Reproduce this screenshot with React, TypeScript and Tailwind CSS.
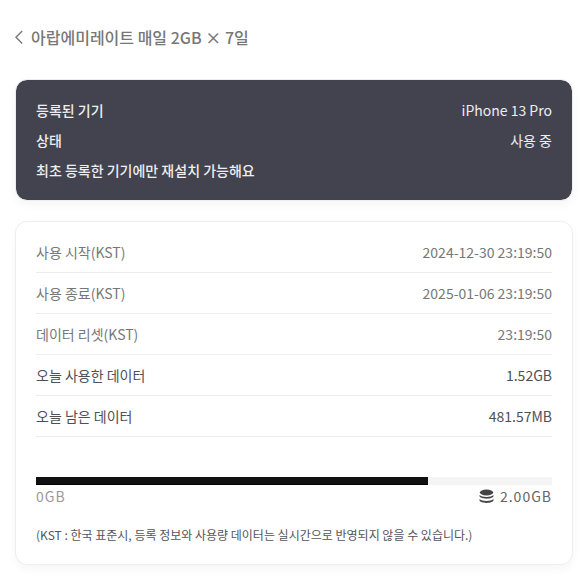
import React from 'react';

interface UsageRow {
  label: string;
  value: string;
  strong?: boolean;
}

const deviceRows: UsageRow[] = [
  { label: '등록된 기기', value: 'iPhone 13 Pro' },
  { label: '상태', value: '사용 중' },
];

const usageRows: UsageRow[] = [
  { label: '사용 시작(KST)', value: '2024-12-30 23:19:50' },
  { label: '사용 종료(KST)', value: '2025-01-06 23:19:50' },
  { label: '데이터 리셋(KST)', value: '23:19:50' },
  { label: '오늘 사용한 데이터', value: '1.52GB', strong: true },
  { label: '오늘 남은 데이터', value: '481.57MB', strong: true },
];

const usedGb = 1.52;
const totalGb = 2;

const BackIcon = () => (
  <svg className="w-2 h-4" viewBox="0 0 8 16" fill="none" stroke="currentColor" strokeWidth="1.4" aria-hidden="true">
    <path d="M7.2 2L1 8.200l6.200 6.200" />
  </svg>
);

const DataIcon = () => (
  <svg className="w-4 h-4" viewBox="0 0 16 16" fill="currentColor" aria-hidden="true">
    <ellipse cx="7.5" cy="4.5" rx="6.7" ry="2.9" />
    <path d="M.5 6.900C1.600 8.100 4.300 8.900 7.500 8.900s5.900-.8 7-2v1.200C14.500 9.500 11.300 10.700 7.500 10.700S.5 9.500.5 8.100z" />
    <path d="M.5 11.100C1.600 12.300 4.300 13.100 7.500 13.100s5.900-.8 7-2v1.200C14.500 13.700 11.300 14.900 7.500 14.900S.5 13.700.5 12.300z" />
  </svg>
);

const App: React.FC = () => {
  const percent = (usedGb / totalGb) * 100;

  return (
    <main className="pl-[15px] pr-[14px] pt-6 pb-5 bg-white text-sm font-['Noto_Sans_CJK_KR','Noto_Sans',sans-serif]">
      <h1>
        <button type="button" className="flex items-center gap-2 h-[26px] text-base font-medium text-[#777]">
          <BackIcon />
          아랍에미레이트 매일 2GB × 7일
        </button>
      </h1>

      <section className="mt-[29px] p-5 rounded-xl border border-[#eee] bg-[#42434e] bg-clip-padding text-[#eee] shadow-[0_4px_10px_rgba(0,0,0,0.04)]">
        <dl className="flex flex-col gap-[10px] leading-5">
          {deviceRows.map((row) => (
            <div key={row.label} className="flex justify-between">
              <dt className="font-medium">{row.label}</dt>
              <dd>{row.value}</dd>
            </div>
          ))}
        </dl>
        <p className="mt-[10px] leading-5 font-medium">최초 등록한 기기에만 재설치 가능해요</p>
      </section>

      <section className="mt-5 px-5 pt-[10px] pb-[19px] rounded-xl border border-[#eee] bg-white shadow-[0_4px_10px_rgba(0,0,0,0.04)]">
        <dl>
          {usageRows.map((row) => (
            <div
              key={row.label}
              className={`flex items-center justify-between h-[41px] border-b border-[#eee] ${row.strong ? 'text-[#4f4f57]' : 'text-[#777]'}`}
            >
              <dt>{row.label}</dt>
              <dd>{row.value}</dd>
            </div>
          ))}
        </dl>

        <div
          className="mt-10 h-2 bg-[#f4f4f4]"
          role="progressbar"
          aria-label="오늘 사용한 데이터"
          aria-valuenow={percent}
          aria-valuemin={0}
          aria-valuemax={100}
        >
          <div className="h-full bg-[#111] border-b border-black" style={{ width: `${percent}%` }} />
        </div>
        <div className="flex justify-between leading-[22px] tracking-[1px]">
          <span className="text-[#999]">0GB</span>
          <span className="flex items-center gap-[5px] text-[#444]">
            <DataIcon />
            <span className="text-[#666]">2.00GB</span>
          </span>
        </div>

        <p className="mt-[18px] text-xs leading-5 text-[#55555a]">
          (KST : 한국 표준시, 등록 정보와 사용량 데이터는 실시간으로 반영되지 않을 수 있습니다.)
        </p>
      </section>
    </main>
  );
};

export default App;
